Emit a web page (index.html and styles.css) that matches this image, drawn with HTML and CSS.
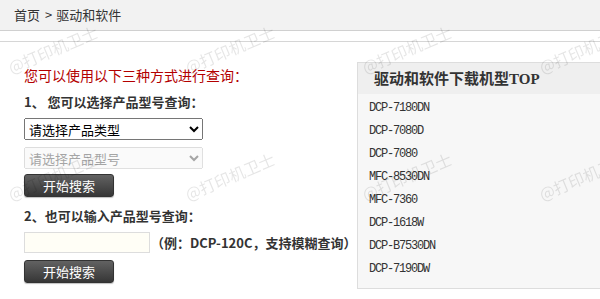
FILE: index.html
```html
<!DOCTYPE html>
<html lang="zh-CN">
<head>
    <meta charset="UTF-8">
    <meta name="viewport" content="width=device-width, initial-scale=1.0">
    <title>驱动和软件</title>
    <link rel="stylesheet" href="styles.css">
</head>
<body>
    <div class="crumb">
        <a href="#">首页</a><span class="sep">&gt;</span><span>驱动和软件</span>
    </div>

    <div class="main">
        <div class="search">
            <p class="tip">您可以使用以下三种方式进行查询：</p>
            <p class="step">1、 您可以选择产品型号查询：</p>
            <select class="sel">
                <option>请选择产品类型</option>
            </select>
            <select class="sel sel-model" disabled>
                <option>请选择产品型号</option>
            </select>
            <button class="btn">开始搜索</button>

            <p class="step step-2">2、也可以输入产品型号查询：</p>
            <div class="row">
                <input type="text" class="kw">
                <span class="eg">（例：DCP-120C，支持模糊查询）</span>
            </div>
            <button class="btn btn-2">开始搜索</button>
        </div>

        <div class="top">
            <h3>驱动和软件下载机型TOP</h3>
            <ul>
                <li><a href="#">DCP-7180DN</a></li>
                <li><a href="#">DCP-7080D</a></li>
                <li><a href="#">DCP-7080</a></li>
                <li><a href="#">MFC-8530DN</a></li>
                <li><a href="#">MFC-7360</a></li>
                <li><a href="#">DCP-1618W</a></li>
                <li><a href="#">DCP-B7530DN</a></li>
                <li><a href="#">DCP-7190DW</a></li>
            </ul>
        </div>
    </div>

    <!-- marca de agua -->
    <div class="mark">
        <span>@打印机卫士</span><span>@打印机卫士</span><span>@打印机卫士</span><span>@打印机卫士</span>
        <span>@打印机卫士</span><span>@打印机卫士</span><span>@打印机卫士</span><span>@打印机卫士</span>
    </div>
</body>
</html>
```

FILE: styles.css
```css
* {
    box-sizing: border-box;
}

html, body {
    overflow: hidden;
}

body {
    margin: 0;
    font-family: "Noto Sans CJK SC", sans-serif;
    color: #333;
    background: #fff;
}

a {
    color: #333;
    text-decoration: none;
}

/* migas */
.crumb {
    height: 31px;
    padding-left: 14px;
    background: #f2f2f2;
    border-bottom: 1px solid #d0d0d0;
    font-size: 13px;
    line-height: 30px;
}

.sep {
    margin: 0 4px 0 5px;
}

.main {
    display: flex;
    align-items: flex-start;
    margin-top: 10px;
    padding-left: 24px;
    border-top: 1px solid #d6d6d6;
}

/* columna izquierda */
.search {
    width: 333px;
    flex-shrink: 0;
}

.tip {
    margin: 0;
    padding-top: 23px;
    font-size: 14px;
    line-height: 20px;
    color: #b30000;
}

.step {
    margin: 7px 0 6px;
    font-size: 13px;
    font-weight: bold;
    line-height: 20px;
    color: #333;
}

.step-2 {
    margin-top: 9px;
}

.sel {
    display: block;
    width: 179px;
    height: 22px;
    margin: 0;
    font-family: inherit;
    font-size: 13px;
}

.sel-model {
    margin-top: 7px;
}

.btn {
    display: block;
    width: 90px;
    height: 23px;
    margin-top: 5px;
    padding: 0;
    border: 1px solid #333;
    border-radius: 3px;
    background: linear-gradient(#626262, #363636);
    box-shadow: 0 1px 1px rgba(0, 0, 0, 0.25);
    color: #fff;
    font-family: inherit;
    font-size: 13px;
    line-height: 21px;
}

.btn-2 {
    margin-top: 7px;
}

.row {
    display: flex;
    align-items: center;
}

.kw {
    width: 126px;
    height: 21px;
    margin: 0;
    border: 1px solid #ddd;
    background: #fffef6;
    outline: none;
}

.eg {
    margin-left: 1px;
    font-size: 13px;
    font-weight: bold;
    white-space: nowrap;
}

/* ranking */
.top {
    width: 260px;
    flex-shrink: 0;
    margin-top: 20px;
    border: 1px solid #ddd;
    background: #f7f7f7;
}

.top h3 {
    margin: 0;
    height: 31px;
    padding: 2px 0 0 16px;
    background: #efefef;
    font-size: 15px;
    font-weight: bold;
    line-height: 29px;
    font-family: "Liberation Serif", "Noto Sans CJK SC", serif;
}

.top ul {
    list-style: none;
    margin: 0;
    padding: 3px 0 7px 11px;
}

.top li {
    font-family: "Liberation Mono", monospace;
    font-size: 12px;
    line-height: 23px;
    letter-spacing: -1.2px;
}

/* marca de agua */
.mark {
    position: fixed;
    top: 0;
    left: 0;
    width: 720px;
    display: grid;
    grid-template-columns: repeat(4, 177px);
    grid-auto-rows: 127px;
    padding: 59px 0 0 12px;
    pointer-events: none;
}

.mark span {
    justify-self: start;
    align-self: start;
    font-size: 16px;
    line-height: 16px;
    white-space: nowrap;
    color: rgba(0, 0, 0, 0.1);
    transform: rotate(-23deg);
    transform-origin: 0 100%;
}
```
